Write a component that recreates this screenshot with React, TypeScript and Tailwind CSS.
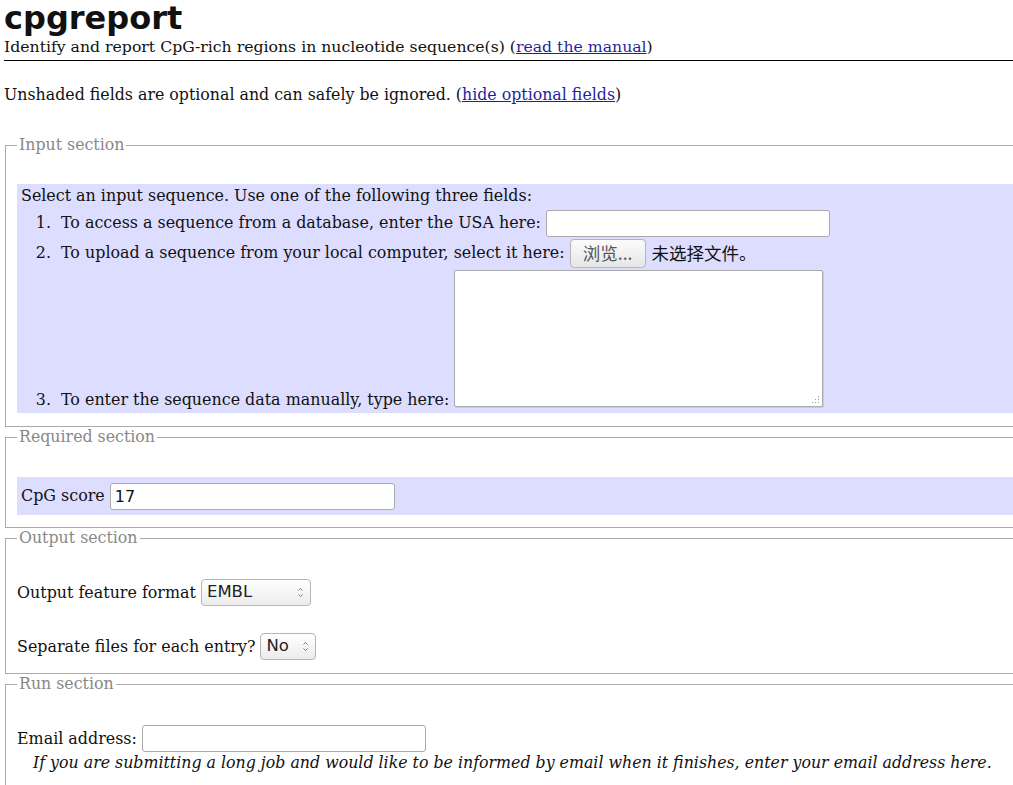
import { useState } from 'react';

const serif = "font-['DejaVu_Serif','Liberation_Serif',serif]";
const sans = "font-['DejaVu_Sans','Liberation_Sans',sans-serif]";
const cjk = "font-['Noto_Sans_CJK_SC','DejaVu_Sans',sans-serif]";

const SelectBox = ({ value, options, width }: { value: string; options: string[]; width: string }) => {
  const [val, setVal] = useState(value);
  return (
    <span className={`relative inline-block align-middle h-[27px] ${width}`}>
      <select
        value={val}
        onChange={(e) => setVal(e.target.value)}
        className={`${sans} appearance-none h-full w-full rounded-[4px] border border-[#b5b5b5] bg-gradient-to-b from-white to-[#ececec] pl-[5px] text-[16.5px] text-[#222] outline-none`}
      >
        {options.map((o) => (
          <option key={o}>{o}</option>
        ))}
      </select>
      <svg className="pointer-events-none absolute right-[8px] top-[8px]" width="5" height="11" viewBox="0 0 5 11">
        <path d="M0.5 3.5 L2.5 1.5 L4.5 3.5" fill="none" stroke="#777" strokeWidth="1" />
        <path d="M0.5 7.5 L2.5 9.5 L4.5 7.5" fill="none" stroke="#777" strokeWidth="1" />
      </svg>
    </span>
  );
};

const Legend = ({ children }: { children: string }) => (
  <legend className="px-[2px] text-[15.8px] leading-[20px] text-[#888]">{children}</legend>
);

const textInput = `${sans} h-[27px] rounded-[3px] border border-[#aaa] bg-white px-[4px] text-[16px] text-[#111] outline-none align-middle`;

export default function App() {
  return (
    <div className={`${serif} w-[1013px] overflow-hidden bg-white pl-[4px] text-[15.9px] text-[#111]`}>
      <h1 className={`${sans} text-[32px] font-bold leading-[37px] text-[#111]`}>cpgreport</h1>
      <div className="text-[15.7px] leading-[19px]">
        Identify and report CpG-rich regions in nucleotide sequence(s) (
        <a href="#" className="text-[#1f1fa3] underline">read the manual</a>)
      </div>
      <hr className="mt-[4px] border-t border-black" />

      <p className="mt-[24px] text-[15.8px] leading-[19px]">
        Unshaded fields are optional and can safely be ignored. (
        <a href="#" className="text-[#1f1fa3] underline">hide optional fields</a>)
      </p>

      <form className="mt-[31px]">
        {/* Input section */}
        <fieldset className="ml-[1px] border border-r-0 border-[#aaa] pl-[11px] pb-[13px]">
          <Legend>Input section</Legend>
          <div className="mt-[29px] bg-[#ddf] pl-[4px]">
            <div className="flex h-[24px] items-center">Select an input sequence. Use one of the following three fields:</div>
            <div className="flex h-[30px] items-center">
              <span className="w-[30px] text-right">1.</span>
              <span className="ml-[10px] whitespace-pre">To access a sequence from a database, enter the USA here: </span>
              <input className={`${textInput} w-[284px]`} />
            </div>
            <div className="flex h-[30px] items-center">
              <span className="w-[30px] text-right">2.</span>
              <span className="ml-[10px] whitespace-pre">To upload a sequence from your local computer, select it here: </span>
              <button
                type="button"
                className={`${cjk} h-[29px] w-[76px] rounded-[4px] border border-[#b5b5b5] bg-gradient-to-b from-[#fbfbfb] to-[#e6e6e6] text-[17.5px] leading-none text-[#555]`}
              >
                浏览...
              </button>
              <span className={`${cjk} ml-[6px] text-[17.5px] text-[#111]`}>未选择文件。</span>
            </div>
            <div className="flex items-end">
              <span className="w-[30px] pb-[4px] leading-[19px] text-right">3.</span>
              <span className="ml-[10px] whitespace-pre pb-[4px] leading-[19px]">To enter the sequence data manually, type here: </span>
              <span className="relative mb-[6px] mt-[2px] inline-block">
                <textarea className="block h-[137px] w-[369px] resize-none rounded-[2px] border border-[#aaa] bg-white outline-none shadow-[1px_1px_0_#ccc]" />
                <svg className="pointer-events-none absolute bottom-[3px] right-[3px]" width="9" height="9" viewBox="0 0 9 9">
                  {[
                    [7, 1], [4, 4], [7, 4], [1, 7], [4, 7], [7, 7],
                  ].map(([x, y], i) => (
                    <rect key={i} x={x} y={y} width="1" height="1" fill="#999" />
                  ))}
                </svg>
              </span>
            </div>
          </div>
        </fieldset>

        {/* Required section */}
        <fieldset className="ml-[1px] border border-r-0 border-[#aaa] pl-[11px] pb-[12px]">
          <Legend>Required section</Legend>
          <div className="mt-[30px] flex h-[38px] items-center bg-[#ddf] pl-[4px]">
            <span className="whitespace-pre">CpG score </span>
            <input defaultValue="17" className={`${textInput} w-[285px]`} />
          </div>
        </fieldset>

        {/* Output section */}
        <fieldset className="ml-[1px] border border-r-0 border-[#aaa] pl-[11px] pb-[13px]">
          <Legend>Output section</Legend>
          <div className="mt-[31px] flex h-[27px] items-center">
            <span className="whitespace-pre">Output feature format </span>
            <SelectBox value="EMBL" options={['EMBL', 'GFF', 'Swiss', 'PIR']} width="w-[110px]" />
          </div>
          <div className="mt-[27px] flex h-[27px] items-center">
            <span className="whitespace-pre">Separate files for each entry? </span>
            <SelectBox value="No" options={['No', 'Yes']} width="w-[56px]" />
          </div>
        </fieldset>

        {/* Run section */}
        <fieldset className="ml-[1px] border border-r-0 border-[#aaa] pl-[11px] pb-[12px]">
          <Legend>Run section</Legend>
          <div className="mt-[31px] flex h-[27px] items-center">
            <span className="whitespace-pre">Email address: </span>
            <input className={`${textInput} w-[284px]`} />
          </div>
          <div className="pl-[16px] text-[15.8px] leading-[21px] italic">
            If you are submitting a long job and would like to be informed by email when it finishes, enter your email address here.
          </div>
          <div className="h-[40px]" />
        </fieldset>
      </form>
    </div>
  );
}
